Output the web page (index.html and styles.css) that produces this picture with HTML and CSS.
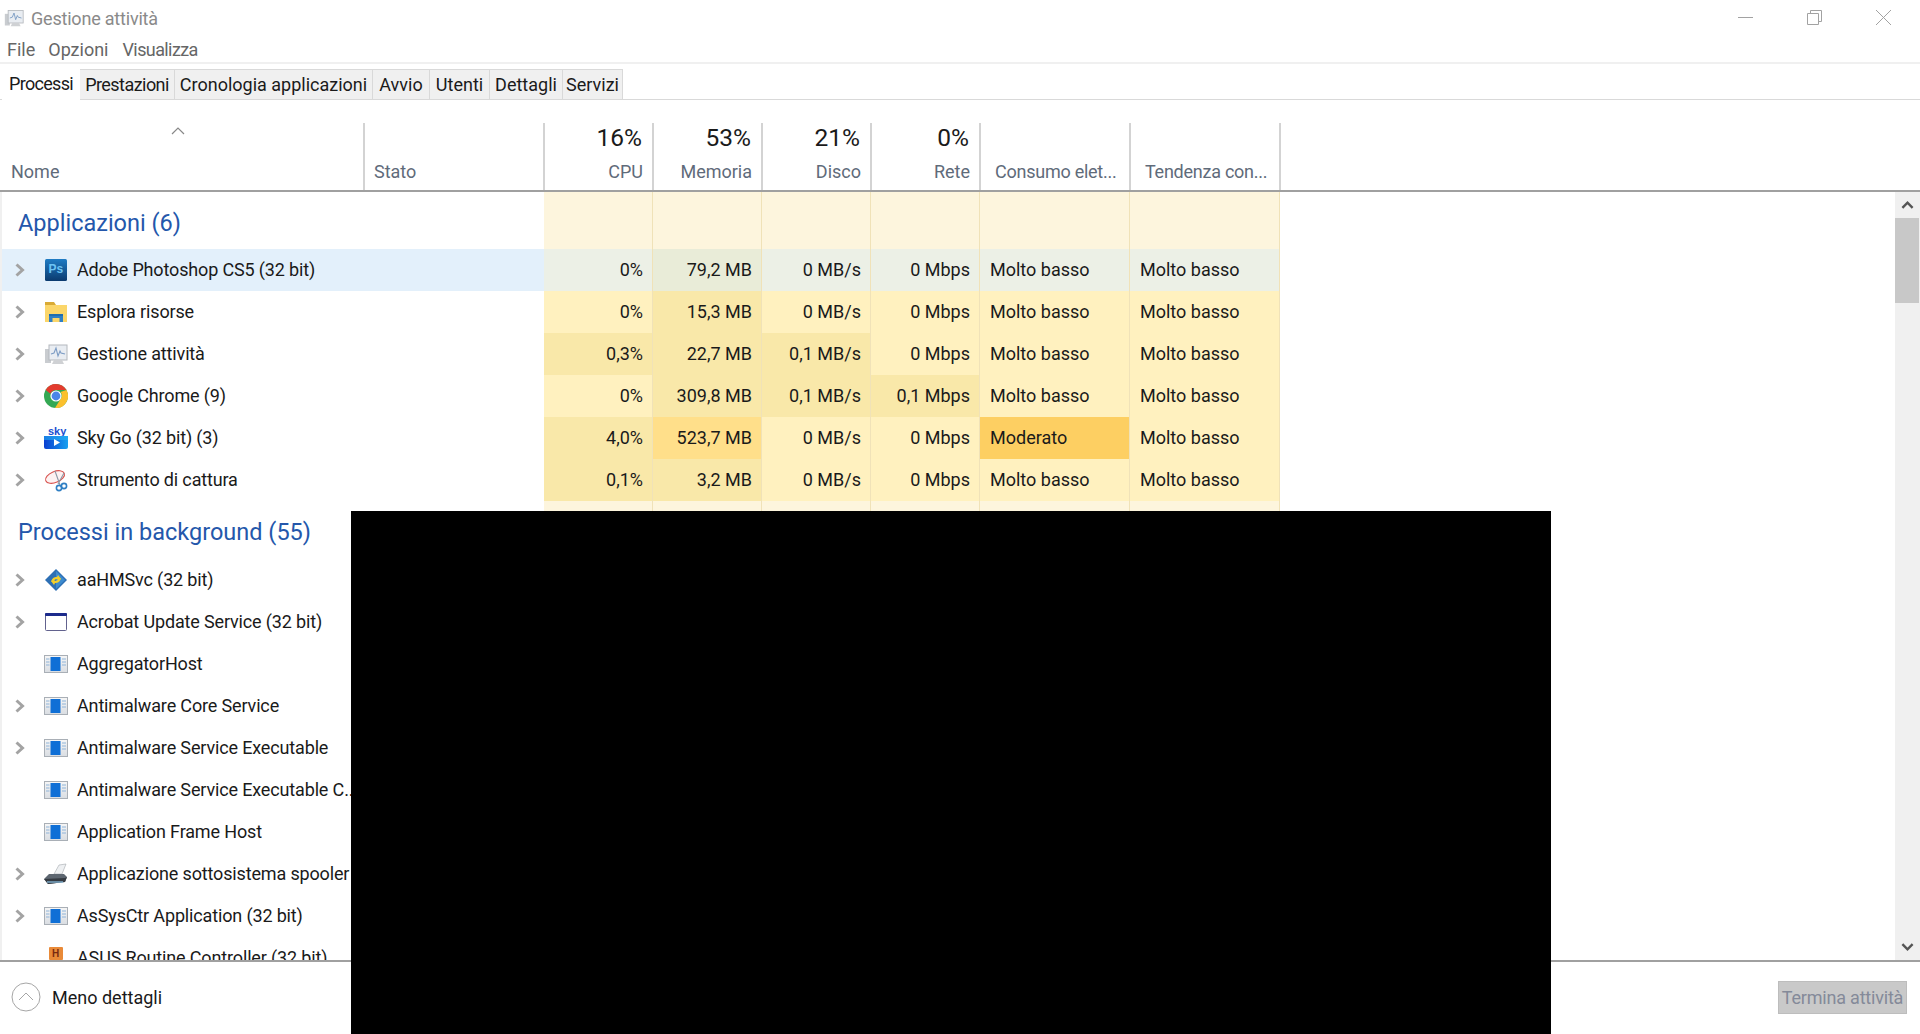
FILE: index.html
```html
<!DOCTYPE html>
<html lang="it">
<head>
<meta charset="utf-8">
<title>Gestione attività</title>
<link rel="stylesheet" href="styles.css">
</head>
<body>
<svg class="defs" width="0" height="0" aria-hidden="true">
  <defs>
    <linearGradient id="psg" x1="0" y1="0" x2="0" y2="1"><stop offset="0" stop-color="#1f7cc4"/><stop offset="1" stop-color="#0b3a6e"/></linearGradient>
    <linearGradient id="skyg" x1="0" y1="0" x2="1" y2="0"><stop offset="0" stop-color="#0a3fd0"/><stop offset="1" stop-color="#19a0f0"/></linearGradient>
    <linearGradient id="svcg" x1="0" y1="0" x2="0" y2="1"><stop offset="0" stop-color="#f6f6f6"/><stop offset="1" stop-color="#d9dde2"/></linearGradient>
    <symbol id="i-chev" viewBox="0 0 10 14"><path d="M1.500 1.500l6 5.500-6 5.500" fill="none" stroke="#a3a3a3" stroke-width="3"/></symbol>
    <symbol id="i-tm" viewBox="0 0 24 24">
      <rect x="1" y="7" width="6" height="14" fill="#c9ccd0"/>
      <rect x="5" y="3" width="18" height="15" fill="#e9edf2" stroke="#b4b8bd"/>
      <path d="M7 12l3-1 2-5 2 8 2-5 1 2 4 1" fill="none" stroke="#7c9cc4" stroke-width="1.100"/>
      <path d="M10 18h8l2 4H8z" fill="#cfd1d4"/>
    </symbol>
    <symbol id="i-ps" viewBox="0 0 24 24"><rect x="1" y="1" width="22" height="22" rx="1.500" fill="url(#psg)"/><text x="4.500" y="15" class="ps-text">Ps</text></symbol>
    <symbol id="i-folder" viewBox="0 0 24 24">
      <path d="M1 2h9l2 3H1z" fill="#d9aa35"/>
      <rect x="1" y="5" width="22" height="17" fill="#fbd66a"/>
      <path d="M5 22v-8h14v8h-3.500v-4h-7v4z" fill="#2f7fc4"/>
      <path d="M5 14h14v2H5z" fill="#1f6db0"/>
    </symbol>
    <symbol id="i-chrome" viewBox="0 0 24 24">
      <circle cx="12" cy="12" r="12" fill="#34a853"/>
      <path d="M12 0a12 12 0 0 1 10.400 6H12a6 6 0 0 0-5.600 3.800L1.700 5.900A12 12 0 0 1 12 0z" fill="#e33b2e"/>
      <path d="M22.400 6A12 12 0 0 1 11 24l5.300-8.500A6 6 0 0 0 16.600 8z" fill="#fbc02d"/>
      <circle cx="12" cy="12" r="5.600" fill="#fff"/>
      <circle cx="12" cy="12" r="4.400" fill="#4a86e8"/>
    </symbol>
    <symbol id="i-sky" viewBox="0 0 24 24">
      <text x="4" y="9" class="sky-text">sky</text>
      <path d="M0 10h24v11a2 2 0 0 1-2 2H2a2 2 0 0 1-2-2z" fill="url(#skyg)"/>
      <path d="M0 14h24v-4H0z" fill="#27b4f5" opacity=".55"/>
      <path d="M10 13l6 3.500-6 3.500z" fill="#fff"/>
    </symbol>
    <symbol id="i-snip" viewBox="0 0 24 24">
      <ellipse cx="11" cy="9" rx="10" ry="5.500" transform="rotate(-22 11 9)" fill="#fdf2f2" stroke="#d8534f" stroke-width="1.100"/>
      <path d="M11 3l5 14M20 5L14 16" stroke="#8c98a6" stroke-width="1.100" fill="none"/>
      <circle cx="15" cy="20" r="2.600" fill="none" stroke="#2f7fc4" stroke-width="1.600"/>
      <circle cx="20" cy="18" r="2.600" fill="none" stroke="#2f7fc4" stroke-width="1.600"/>
    </symbol>
    <symbol id="i-aahm" viewBox="0 0 24 24">
      <path d="M12 1l11 11-11 11L1 12z" fill="#2d6fb4"/>
      <path d="M12 3l9 9-9 9z" fill="#3d8bd0"/>
      <path d="M7 14c1-4 3-5 6-5l1-2 3 4-4 2 .5-2c-2 0-4 1-6.500 3z" fill="#f3cf2b"/>
      <path d="M17 10c-1 4-3 5-6 5l-1 2-3-4 4-2-.5 2c2 0 4-1 6.500-3z" fill="#f3cf2b"/>
    </symbol>
    <symbol id="i-win" viewBox="0 0 24 24">
      <rect x="1.500" y="3.500" width="21" height="17" rx="1" fill="#fff" stroke="#62628e"/>
      <rect x="1" y="3" width="22" height="3" rx="1" fill="#1c2b8c"/>
    </symbol>
    <symbol id="i-svc" viewBox="0 0 24 24">
      <rect x=".5" y="3.500" width="23" height="17" fill="url(#svcg)" stroke="#a9afb6"/>
      <rect x="6.500" y="5" width="10" height="14" fill="#0f6fd6"/>
      <path d="M2 7h3.500M2 10h3.500M2 13h3.500M18 7h4M18 10h4M18 13h4" stroke="#8fb4d9"/>
    </symbol>
    <symbol id="i-print" viewBox="0 0 24 24">
      <path d="M10 12l5-9 7-1-4 10z" fill="#eef0f2" stroke="#a4a9ae" stroke-width=".6"/>
      <path d="M0 17l5-5h15l3 3-2 5-17 2z" fill="#5d6670"/>
      <path d="M0 17l21-1 2-1-2 5-17 2z" fill="#353b42"/>
      <path d="M3 20h16" stroke="#8fc7ea" stroke-width="1.200"/>
    </symbol>
    <symbol id="i-asus" viewBox="0 0 24 24">
      <rect x="5" y="1" width="14" height="13" rx="1" fill="#e98a38"/>
      <text x="8" y="11" class="asus-text">H</text>
      <rect x="1" y="14" width="11" height="10" fill="#58a05a"/>
      <rect x="12" y="14" width="11" height="10" fill="#6c9bd1"/>
    </symbol>
  </defs>
</svg>

<div class="app">
  <header class="titlebar">
    <div class="title">
      <svg class="title-icon"><use href="#i-tm"/></svg>
      <span>Gestione attività</span>
    </div>
    <div class="controls">
      <svg class="ctl" viewBox="0 0 15 15"><path d="M0 7.500h15"/></svg>
      <svg class="ctl" viewBox="0 0 15 15"><path d="M.5 3.500h11v11H.5zM3.500 3.500V.5h11v11h-3"/></svg>
      <svg class="ctl" viewBox="0 0 15 15"><path d="M0 0l15 15M15 0L0 15"/></svg>
    </div>
  </header>

  <nav class="menu"><span>File</span><span>Opzioni</span><span class="m-vis">Visualizza</span></nav>

  <div class="tabs">
    <span class="tab active">Processi</span>
    <span class="tab w-pre">Prestazioni</span>
    <span class="tab w-cro">Cronologia applicazioni</span>
    <span class="tab w-avv">Avvio</span>
    <span class="tab w-ute">Utenti</span>
    <span class="tab w-det">Dettagli</span>
    <span class="tab w-ser">Servizi</span>
  </div>

  <div class="head">
    <div class="hc c-name">
      <svg class="sort" viewBox="0 0 14 8"><path d="M1 7l6-6 6 6"/></svg>
      <span class="hl">Nome</span>
    </div>
    <div class="hc c-stato"><span class="hl">Stato</span></div>
    <div class="hc c-num num"><span class="pct">16%</span><span class="hl">CPU</span></div>
    <div class="hc c-num num"><span class="pct">53%</span><span class="hl">Memoria</span></div>
    <div class="hc c-num num"><span class="pct">21%</span><span class="hl">Disco</span></div>
    <div class="hc c-num num"><span class="pct">0%</span><span class="hl">Rete</span></div>
    <div class="hc c-pow"><span class="hl">Consumo elet...</span></div>
    <div class="hc c-pow"><span class="hl">Tendenza con...</span></div>
  </div>

  <main class="main">
    <div class="list">
      <div class="row group first">
        <div class="name"><span class="gt">Applicazioni (6)</span></div>
        <div class="v n"></div><div class="v n"></div><div class="v n"></div><div class="v n"></div><div class="v p"></div><div class="v p"></div>
      </div>
      <div class="row hover">
        <div class="name"><svg class="chev"><use href="#i-chev"/></svg><svg class="ico"><use href="#i-ps"/></svg><span class="lbl">Adobe Photoshop CS5 (32 bit)</span></div>
        <div class="v n">0%</div><div class="v n hm">79,2 MB</div><div class="v n">0 MB/s</div><div class="v n">0 Mbps</div><div class="v p">Molto basso</div><div class="v p">Molto basso</div>
      </div>
      <div class="row">
        <div class="name"><svg class="chev"><use href="#i-chev"/></svg><svg class="ico"><use href="#i-folder"/></svg><span class="lbl">Esplora risorse</span></div>
        <div class="v n">0%</div><div class="v n m">15,3 MB</div><div class="v n">0 MB/s</div><div class="v n">0 Mbps</div><div class="v p">Molto basso</div><div class="v p">Molto basso</div>
      </div>
      <div class="row">
        <div class="name"><svg class="chev"><use href="#i-chev"/></svg><svg class="ico"><use href="#i-tm"/></svg><span class="lbl">Gestione attività</span></div>
        <div class="v n m">0,3%</div><div class="v n m">22,7 MB</div><div class="v n m">0,1 MB/s</div><div class="v n">0 Mbps</div><div class="v p">Molto basso</div><div class="v p">Molto basso</div>
      </div>
      <div class="row">
        <div class="name"><svg class="chev"><use href="#i-chev"/></svg><svg class="ico"><use href="#i-chrome"/></svg><span class="lbl">Google Chrome (9)</span></div>
        <div class="v n">0%</div><div class="v n m">309,8 MB</div><div class="v n m">0,1 MB/s</div><div class="v n m">0,1 Mbps</div><div class="v p">Molto basso</div><div class="v p">Molto basso</div>
      </div>
      <div class="row">
        <div class="name"><svg class="chev"><use href="#i-chev"/></svg><svg class="ico"><use href="#i-sky"/></svg><span class="lbl">Sky Go (32 bit) (3)</span></div>
        <div class="v n m">4,0%</div><div class="v n s">523,7 MB</div><div class="v n">0 MB/s</div><div class="v n">0 Mbps</div><div class="v p mod">Moderato</div><div class="v p">Molto basso</div>
      </div>
      <div class="row">
        <div class="name"><svg class="chev"><use href="#i-chev"/></svg><svg class="ico"><use href="#i-snip"/></svg><span class="lbl">Strumento di cattura</span></div>
        <div class="v n m">0,1%</div><div class="v n m">3,2 MB</div><div class="v n">0 MB/s</div><div class="v n">0 Mbps</div><div class="v p">Molto basso</div><div class="v p">Molto basso</div>
      </div>
      <div class="row group">
        <div class="name"><span class="gt">Processi in background (55)</span></div>
        <div class="v n"></div><div class="v n"></div><div class="v n"></div><div class="v n"></div><div class="v p"></div><div class="v p"></div>
      </div>
      <div class="row bg"><div class="name"><svg class="chev"><use href="#i-chev"/></svg><svg class="ico"><use href="#i-aahm"/></svg><span class="lbl">aaHMSvc (32 bit)</span></div></div>
      <div class="row bg"><div class="name"><svg class="chev"><use href="#i-chev"/></svg><svg class="ico"><use href="#i-win"/></svg><span class="lbl">Acrobat Update Service (32 bit)</span></div></div>
      <div class="row bg"><div class="name"><span class="chev"></span><svg class="ico"><use href="#i-svc"/></svg><span class="lbl">AggregatorHost</span></div></div>
      <div class="row bg"><div class="name"><svg class="chev"><use href="#i-chev"/></svg><svg class="ico"><use href="#i-svc"/></svg><span class="lbl">Antimalware Core Service</span></div></div>
      <div class="row bg"><div class="name"><svg class="chev"><use href="#i-chev"/></svg><svg class="ico"><use href="#i-svc"/></svg><span class="lbl">Antimalware Service Executable</span></div></div>
      <div class="row bg"><div class="name"><span class="chev"></span><svg class="ico"><use href="#i-svc"/></svg><span class="lbl">Antimalware Service Executable C...</span></div></div>
      <div class="row bg"><div class="name"><span class="chev"></span><svg class="ico"><use href="#i-svc"/></svg><span class="lbl">Application Frame Host</span></div></div>
      <div class="row bg"><div class="name"><svg class="chev"><use href="#i-chev"/></svg><svg class="ico"><use href="#i-print"/></svg><span class="lbl">Applicazione sottosistema spooler</span></div></div>
      <div class="row bg"><div class="name"><svg class="chev"><use href="#i-chev"/></svg><svg class="ico"><use href="#i-svc"/></svg><span class="lbl">AsSysCtr Application (32 bit)</span></div></div>
      <div class="row bg"><div class="name"><span class="chev"></span><svg class="ico"><use href="#i-asus"/></svg><span class="lbl">ASUS Routine Controller (32 bit)</span></div></div>
    </div>
    <aside class="scroll">
      <div class="sbtn"><svg viewBox="0 0 14 10"><path d="M1.500 8L7 2.500 12.500 8"/></svg></div>
      <div class="thumb"></div>
      <div class="track"></div>
      <div class="sbtn"><svg viewBox="0 0 14 10"><path d="M1.500 2L7 7.500 12.500 2"/></svg></div>
    </aside>
  </main>

  <footer class="foot">
    <div class="less">
      <svg class="circle" viewBox="0 0 30 30"><circle cx="15" cy="15" r="14" /><path d="M8 18l7-7 7 7"/></svg>
      <span>Meno dettagli</span>
    </div>
    <button class="end" type="button">Termina attività</button>
  </footer>

  <div class="redact"></div>
</div>
</body>
</html>
```
FILE: styles.css
```css
* { box-sizing: border-box; }
html, body { margin: 0; height: 100%; background: #fff; }
body {
  font-family: Roboto, "Noto Sans", "DejaVu Sans", sans-serif;
  font-size: 18px;
  color: #1a1a1a;
  overflow: hidden;
}
.defs { position: absolute; }
.ps-text { font: bold 12px "Liberation Sans", sans-serif; fill: #6cc4f4; }
.sky-text { font: bold 11px "Liberation Sans", sans-serif; fill: #1a4fd0; }
.asus-text { font: bold 10px "Liberation Sans", sans-serif; fill: #7a2a10; }

.app { position: relative; width: 1920px; height: 1034px; display: flex; flex-direction: column; }

.titlebar { height: 36px; display: flex; justify-content: space-between; align-items: center; flex: none; }
.title { display: flex; align-items: center; gap: 7px; padding-left: 4px; color: #8a8a8a; letter-spacing: -.2px; }
.title-icon { width: 20px; height: 20px; }
.controls { display: flex; gap: 54px; padding-right: 29px; padding-bottom: 2px; }
.ctl { width: 15px; height: 15px; fill: none; stroke: #a2a2a2; stroke-width: 1; }

.menu { height: 28px; flex: none; display: flex; gap: 13px; align-items: center; padding: 0 0 0 7px; color: #666; border-bottom: 2px solid #f0f0f0; }
.m-vis { letter-spacing: -.6px; margin-left: 1px; }

.tabs { height: 36px; flex: none; display: flex; align-items: flex-end; padding-left: 2px; border-bottom: 1px solid #d9d9d9; position: relative; }
.tab { height: 31px; margin-bottom: -1px; display: flex; align-items: center; justify-content: center; background: #f0f0f0; border: 1px solid #d9d9d9; border-left: 0; }
.tab.active { width: 78px; height: 33px; background: #fff; border: 0; padding-bottom: 1px; letter-spacing: -.7px; }
.w-pre { width: 95px; letter-spacing: -.55px; }
.w-cro { width: 198px; }
.w-avv { width: 57px; }
.w-ute { width: 60px; }
.w-det { width: 73px; }
.w-ser { width: 60px; }

.head { height: 92px; flex: none; display: flex; padding-top: 23px; border-bottom: 2px solid #a0a0a0; padding-left: 2px; color: #5f6b7a; }
.hc { position: relative; border-right: 2px solid #d3d3d3; display: flex; flex-direction: column; justify-content: flex-end; padding-bottom: 6px; }
.c-name { width: 363px; padding-left: 9px; }
.c-stato { width: 180px; padding-left: 9px; }
.c-num { width: 109px; }
.c-pow { width: 150px; padding-left: 14px; letter-spacing: -.25px; }
.num { align-items: flex-end; padding-right: 9px; }
.hl { line-height: 24px; }
.pct { font-size: 24.500px; line-height: 32px; color: #1a1a1a; margin-bottom: 6px; margin-right: 1px; }
.sort { position: absolute; left: 169px; top: 4px; width: 14px; height: 8px; fill: none; stroke: #888; stroke-width: 1.2; }

.main { flex: 1; min-height: 0; display: flex; border-left: 2px solid #f0f0f0; }
.list { flex: 1; min-width: 0; overflow: hidden; }
.row { height: 42px; display: flex; align-items: stretch; }
.row.group { height: 58px; }
.row.group.first { height: 57px; }
.name { width: 542px; flex: none; display: flex; align-items: center; white-space: nowrap; overflow: hidden; }
.lbl { letter-spacing: -.15px; padding-bottom: 2px; }
.chev { width: 10px; height: 14px; margin-left: 13px; margin-right: 19px; flex: none; display: block; }
.ico { width: 24px; height: 24px; flex: none; margin-right: 9px; }
.gt { margin-left: 16px; font-size: 23.500px; color: #2457ab; padding-top: 4px; }
.v { display: flex; align-items: center; padding-bottom: 2px; background: #fff1bf; border-right: 1px solid #f0e2b8; white-space: nowrap; }
.n { width: 109px; justify-content: flex-end; padding-right: 9px; }
.p { width: 150px; padding-left: 10px; }
.m { background: #f9e8a9; }
.s { background: #ffdf8a; }
.mod { background: #fdcf62; }
.group .v { background: #fdf5dd; }
.hover .name { background: #e3f0fb; }
.hover .v { background: #ecf0e6; }
.hover .hm { background: #e9ecd8; }

.scroll { width: 25px; flex: none; background: #f0f0f0; display: flex; flex-direction: column; }
.sbtn { height: 26px; flex: none; display: flex; align-items: center; justify-content: center; }
.sbtn svg { width: 13px; height: 10px; fill: none; stroke: #555; stroke-width: 2.6; }
.thumb { height: 85px; flex: none; background: #c8c8c8; margin-right: 1px; }
.track { flex: 1; }

.foot { height: 74px; flex: none; border-top: 2px solid #a0a0a0; display: flex; align-items: center; justify-content: space-between; padding: 0 13px 2px 11px; }
.less { display: flex; align-items: center; gap: 11px; }
.circle { width: 30px; height: 30px; fill: none; stroke: #a6a6a6; stroke-width: 1; }
.end { width: 129px; height: 33px; padding: 0; font: inherit; letter-spacing: -.2px; color: #848a99; background: #c9c9c9; border: 1px solid #bdbdbd; }

.redact { position: absolute; left: 351px; top: 511px; width: 1200px; height: 523px; background: #000; }
```
